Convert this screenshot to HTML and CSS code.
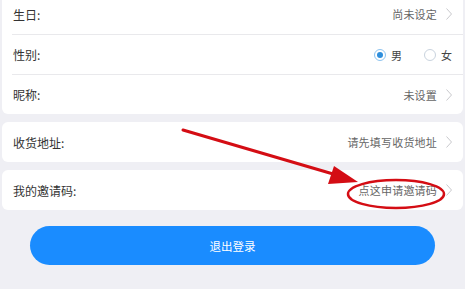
FILE: index.html
```html
<!DOCTYPE html>
<html lang="zh-CN">
<head>
  <meta charset="UTF-8">
  <title>个人资料</title>
  <link rel="stylesheet" href="styles.css">
</head>
<body>
  <div class="page">
    <div class="card">
      <div class="row">
        <span class="label">生日:</span>
        <span class="value">尚未设定</span>
        <svg class="chevron" viewBox="0 0 6 12"><polyline points="0.5,0.5 5.5,6 0.5,11.5"/></svg>
      </div>
      <div class="row">
        <span class="label">性别:</span>
        <div class="gender">
          <span class="radio checked"></span><span class="opt">男</span>
          <span class="radio"></span><span class="opt">女</span>
        </div>
      </div>
      <div class="row">
        <span class="label">昵称:</span>
        <span class="value">未设置</span>
        <svg class="chevron" viewBox="0 0 6 12"><polyline points="0.5,0.5 5.5,6 0.5,11.5"/></svg>
      </div>
    </div>

    <div class="card">
      <div class="row">
        <span class="label">收货地址:</span>
        <span class="value">请先填写收货地址</span>
        <svg class="chevron" viewBox="0 0 6 12"><polyline points="0.5,0.5 5.5,6 0.5,11.5"/></svg>
      </div>
    </div>

    <div class="card">
      <div class="row">
        <span class="label">我的邀请码:</span>
        <span class="value">点这申请邀请码</span>
        <svg class="chevron" viewBox="0 0 6 12"><polyline points="0.5,0.5 5.5,6 0.5,11.5"/></svg>
      </div>
    </div>

    <button class="logout-btn">退出登录</button>
  </div>

  <!-- 标注：红色箭头和圈 -->
  <svg class="mark" width="465" height="289" viewBox="0 0 465 289">
    <line x1="183" y1="130" x2="340" y2="176" stroke="#d40d14" stroke-width="3" stroke-linecap="round"/>
    <polygon points="358,182 334,166 328,184" fill="#d40d14"/>
    <ellipse cx="396" cy="194" rx="48" ry="14" fill="none" stroke="#d40d14" stroke-width="2.5"/>
  </svg>
</body>
</html>
```

FILE: styles.css
```css
* {
  margin: 0;
  padding: 0;
  box-sizing: border-box;
}

body {
  background-color: #efeff4;
  font-family: 'Noto Sans CJK SC', 'Noto Sans', sans-serif;
  width: 465px;
  height: 289px;
  overflow: hidden;
  position: relative;
}

.page {
  display: flex;
  flex-direction: column;
  gap: 8px;
  padding: 0 2px;
  margin-top: -6px;
}

.card {
  background-color: #ffffff;
  border-radius: 6px;
}

.row {
  display: flex;
  align-items: center;
  height: 40px;
  padding: 0 11px;
}

.row + .row {
  border-top: 1px solid #e9e9ec;
  margin-left: 10px;
  padding-left: 1px;
}

.label {
  font-size: 12px;
  color: #333333;
  flex: 1;
}

.value {
  font-size: 11px;
  letter-spacing: 0.2px;
  color: #666666;
}

.chevron {
  width: 6px;
  height: 12px;
  margin-left: 9px;
  fill: none;
  stroke: #c8c8cc;
  stroke-width: 1;
}

.gender {
  display: flex;
  align-items: center;
}

.radio {
  width: 12px;
  height: 12px;
  border-radius: 50%;
  border: 1px solid #c9d3de;
  background-color: #fff;
  position: relative;
  margin-right: 5px;
}

.radio.checked {
  border-color: #8fc4ef;
}

.radio.checked::after {
  content: '';
  position: absolute;
  left: 2px;
  top: 2px;
  width: 6px;
  height: 6px;
  border-radius: 50%;
  background-color: #2f8fdc;
}

.opt {
  font-size: 11px;
  color: #444444;
  margin-right: 22px;
}

.opt:last-child {
  margin-right: 0;
}

.logout-btn {
  align-self: center;
  width: 405px;
  height: 39px;
  margin-top: 8px;
  border: none;
  border-radius: 20px;
  background-color: #1a8cff;
  color: #ffffff;
  font-family: 'Noto Sans CJK SC', 'Noto Sans', sans-serif;
  font-size: 11.5px;
}

.mark {
  position: absolute;
  left: 0;
  top: 0;
  pointer-events: none;
}
```
